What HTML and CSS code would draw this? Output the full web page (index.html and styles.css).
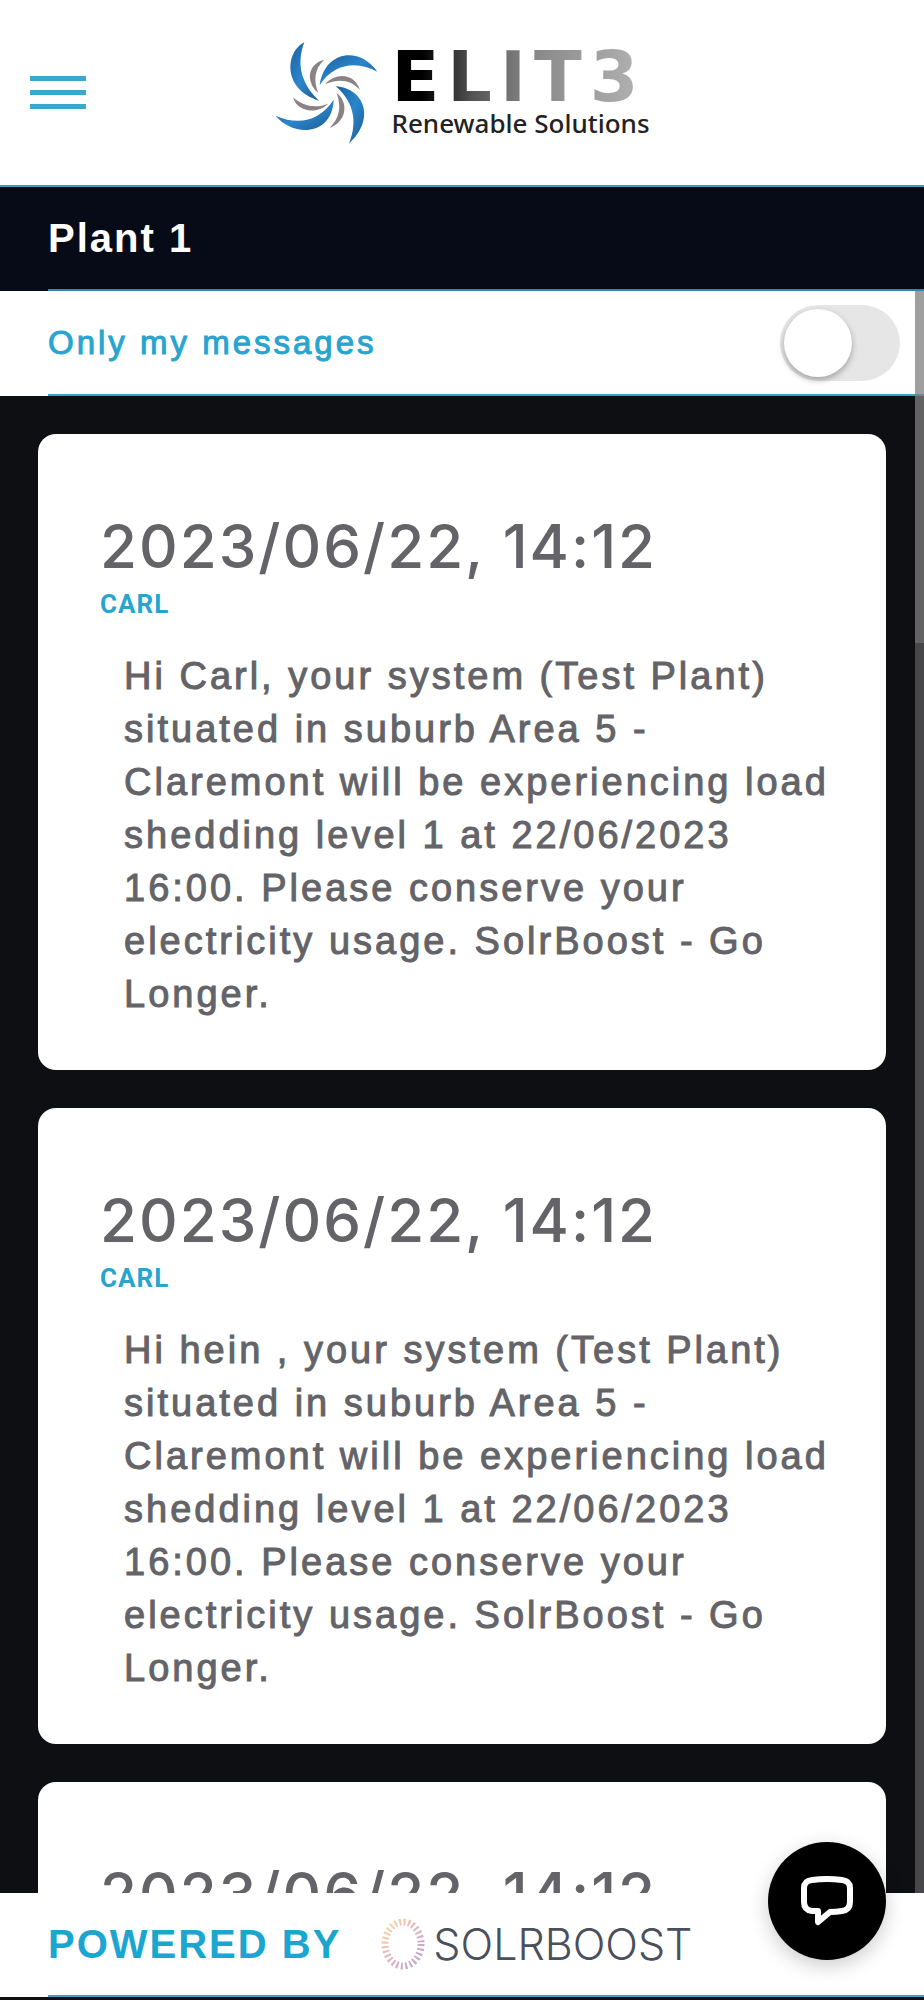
FILE: index.html
```html
<!DOCTYPE html>
<html lang="en">
<head>
  <meta charset="utf-8" />
  <title>Elite Renewable Solutions - Messages</title>
  <meta name="viewport" content="width=device-width, initial-scale=1.0" />
  <link rel="stylesheet" href="styles.css">
</head>
<body>
<header class="header">
  <button class="menu" type="button" aria-label="Menu"><span></span><span></span><span></span></button>
  <a class="logo" href="#">
    <svg class="logo-mark" viewBox="15 34 315 312" aria-hidden="true">
      <defs>
        <linearGradient id="blade" x1="0" y1="0" x2="1" y2="1">
          <stop offset="0" stop-color="#1d5f9e" />
          <stop offset="0.5" stop-color="#2a86cb" />
          <stop offset="1" stop-color="#1c5a94" />
        </linearGradient>
      </defs>
      <g fill="url(#blade)">
        <path d="M106 38C50 66 38 178 150 213C104 170 78 112 106 38Z" />
        <path d="M152 166C168 62 272 50 325 126C268 94 196 98 152 166Z" />
        <path d="M200 170C288 176 320 270 240 342C268 274 252 214 200 170Z" />
        <path d="M20 258C74 324 190 318 194 210C152 272 92 290 20 258Z" />
      </g>
      <g fill="#8a8285">
        <path d="M166 90C112 104 112 160 148 190C134 156 134 118 166 90Z" />
        <path d="M168 164C204 124 258 134 273 181C246 150 208 146 168 164Z" />
        <path d="M203 190C238 216 236 274 182 295C212 264 218 232 203 190Z" />
        <path d="M72 203C84 246 142 256 178 222C142 236 104 232 72 203Z" />
      </g>
    </svg>
    <span class="logo-text">
      <span class="logo-name">ELIT3</span>
      <span class="logo-sub">Renewable Solutions</span>
    </span>
  </a>
</header>

<h1 class="plant"><span>Plant 1</span></h1>

<div class="filter">
  <div class="filter-row">
    <label for="mine">Only my messages</label>
    <input class="toggle" type="checkbox" role="switch" id="mine" />
  </div>
</div>

<main class="list">
  <article class="card">
    <h2>2023/06/22, 14:12</h2>
    <h3>CARL</h3>
    <p>Hi Carl, your system (Test Plant) situated in suburb Area 5 - Claremont will be experiencing load shedding level 1 at 22/06/2023 16:00. Please conserve your electricity usage. SolrBoost - Go Longer.</p>
  </article>
  <article class="card">
    <h2>2023/06/22, 14:12</h2>
    <h3>CARL</h3>
    <p>Hi hein , your system (Test Plant) situated in suburb Area 5 - Claremont will be experiencing load shedding level 1 at 22/06/2023 16:00. Please conserve your electricity usage. SolrBoost - Go Longer.</p>
  </article>
  <article class="card">
    <h2>2023/06/22, 14:12</h2>
  </article>
</main>

<footer class="footer">
  <div class="footer-row">
    <span class="powered">POWERED BY</span>
    <a class="solr" href="#">
      <svg class="solr-ring" viewBox="0 0 44 52" aria-hidden="true">
        <defs>
          <linearGradient id="sun" x1="0" y1="0" x2="1" y2="1">
            <stop offset="0" stop-color="#fcd9a0" />
            <stop offset="0.45" stop-color="#e6b4bc" />
            <stop offset="1" stop-color="#b9a3d2" />
          </linearGradient>
        </defs>
        <ellipse cx="22" cy="26" rx="18" ry="22" fill="none" stroke="url(#sun)" stroke-width="7" stroke-dasharray="2 2.5" />
      </svg>
      <span>SOLRBOOST</span>
    </a>
  </div>
</footer>

<div class="scrollbar"><div class="thumb"></div></div>

<button class="chat" type="button" aria-label="Chat">
  <svg viewBox="0 0 54 50" fill="none" stroke="#fff" stroke-width="6" stroke-linejoin="round" aria-hidden="true">
    <path d="M12 4Q27 2 42 4Q50 5 50 12V26Q50 34 42 35Q36 36 30 36L18 46V35L12 35Q4 34 4 26V12Q4 5 12 4Z" />
  </svg>
</button>
</body>
</html>
```
FILE: styles.css
```css
* {
  box-sizing: border-box;
}
body {
  margin: 0;
  height: 100vh;
  display: flex;
  flex-direction: column;
  background: #0e0f13;
  color: #636368;
  font-family: "Liberation Sans", Arial, sans-serif;
}
h1, h2, h3, p {
  margin: 0;
}
a {
  text-decoration: none;
  color: inherit;
}
button {
  border: 0;
  padding: 0;
  cursor: pointer;
}

.header {
  display: grid;
  grid-template-columns: 1fr auto 1fr;
  align-items: center;
  height: 187px;
  flex: none;
  padding: 0 30px;
  background: #fff;
  border-bottom: 2px solid #38a3c0;
}
.menu {
  display: flex;
  flex-direction: column;
  gap: 9px;
  width: 56px;
  background: none;
}
.menu span {
  height: 5px;
  background: #38aac9;
}
.logo {
  display: flex;
  align-items: center;
  gap: 12px;
}
.logo-mark {
  width: 105px;
  height: 104px;
}
.logo-text {
  display: flex;
  flex-direction: column;
}
.logo-name {
  font: bold 70px/60px "DejaVu Sans", sans-serif;
  letter-spacing: 8px;
  background: linear-gradient(90deg, #000 12%, #555 32%, #888 55%, #b5b5b5);
  -webkit-background-clip: text;
  background-clip: text;
  color: transparent;
}
.logo-sub {
  font: 500 26px/32px "Noto Sans", sans-serif;
  color: #222;
}

.plant {
  flex: none;
  padding-left: 48px;
  background: #070b17;
  color: #fff;
  font-size: 40px;
  line-height: 102px;
  letter-spacing: 2px;
}
.plant span {
  display: block;
  border-bottom: 2px solid #2e86b4;
}

.filter {
  flex: none;
  padding-left: 48px;
  background: #fff;
}
.filter-row {
  display: flex;
  align-items: center;
  justify-content: space-between;
  height: 105px;
  padding-right: 24px;
  border-bottom: 2px solid #38a3c0;
}
.filter label {
  color: #27a5cf;
  font-size: 33px;
  letter-spacing: 3px;
  -webkit-text-stroke: 1px #27a5cf;
}
.toggle {
  appearance: none;
  margin: 0;
  width: 120px;
  height: 76px;
  padding: 4px;
  border-radius: 38px;
  background: #e6e6e6;
}
.toggle::before {
  content: "";
  display: block;
  width: 68px;
  height: 68px;
  border-radius: 50%;
  background: #fff;
  box-shadow: 0 3px 6px rgba(0, 0, 0, 0.3);
}
.toggle:checked {
  background: #27a5cf;
}
.toggle:checked::before {
  margin-left: auto;
}

.list {
  flex: 1;
  min-height: 0;
  overflow: hidden;
  padding: 38px;
}
.card {
  margin-bottom: 38px;
  padding: 76px 38px 49px 62px;
  border-radius: 18px;
  background: #fff;
}
.card h2 {
  font: 500 60px/72px Inter, sans-serif;
  letter-spacing: 2px;
}
.card h3 {
  color: #27a5cf;
  font: bold 26px/44px Roboto, sans-serif;
  letter-spacing: 1px;
}
.card p {
  margin: 24px 0 0 24px;
  font-size: 38px;
  line-height: 53px;
  letter-spacing: 3px;
  -webkit-text-stroke: 1px #636368;
}

.footer {
  flex: none;
  padding-left: 48px;
  margin-bottom: 3px;
  background: #fff;
}
.footer-row {
  display: flex;
  align-items: center;
  gap: 40px;
  height: 104px;
  border-bottom: 2px solid #38a3c0;
}
.powered {
  color: #1ba6d0;
  font-weight: bold;
  font-size: 40px;
  letter-spacing: 2px;
}
.solr {
  display: flex;
  align-items: center;
  gap: 8px;
  font: 300 43px/52px Inter, sans-serif;
  color: #4a4f5c;
}
.solr-ring {
  width: 44px;
  height: 52px;
}

/* overlay scrollbar, runs from the filter row down to the footer */
.scrollbar {
  position: fixed;
  top: 291px;
  right: 0;
  bottom: 107px;
  width: 9px;
  background: rgba(128, 128, 128, 0.5);
}
.thumb {
  height: 22%;
  background: rgba(128, 128, 128, 0.5);
}
.chat {
  position: fixed;
  right: 38px;
  bottom: 40px;
  width: 118px;
  height: 118px;
  border-radius: 50%;
  background: #000;
  box-shadow: 0 6px 20px rgba(0, 0, 0, 0.2);
}
.chat svg {
  display: block;
  width: 54px;
  height: 50px;
  margin: 0 auto;
}
```
